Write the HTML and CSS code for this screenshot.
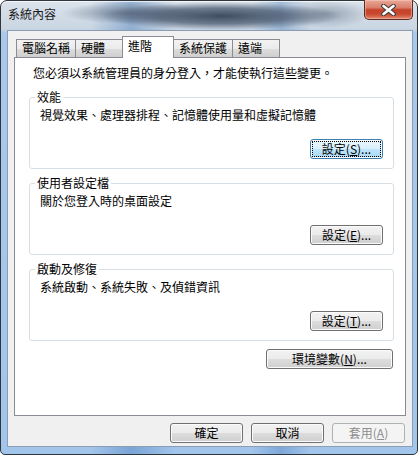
FILE: index.html
```html
<!DOCTYPE html>
<html lang="zh-Hant">
<head>
    <meta charset="UTF-8">
    <meta name="viewport" content="width=device-width, initial-scale=1.0">
    <title>系統內容</title>
    <link rel="stylesheet" href="styles.css">
</head>
<body>
    <div class="window">
        <div class="titlebar">
            <span class="title">系統內容</span>
            <button class="close-btn" title="關閉">
                <svg viewBox="0 0 15 12" width="15" height="12">
                    <path d="M2.5,2 L12.5,10 M12.5,2 L2.5,10" stroke="#3b3b3b" stroke-width="4.6" stroke-linecap="round" fill="none" />
                    <path d="M2.5,2 L12.5,10 M12.5,2 L2.5,10" stroke="#ffffff" stroke-width="2.6" stroke-linecap="round" fill="none" />
                </svg>
            </button>
        </div>

        <div class="client">
            <div class="tabs">
                <div class="tab">電腦名稱</div>
                <div class="tab">硬體</div>
                <div class="tab tab-active">進階</div>
                <div class="tab">系統保護</div>
                <div class="tab">遠端</div>
            </div>

            <div class="panel">
                <p class="intro">您必須以系統管理員的身分登入，才能使執行這些變更。</p>

                <fieldset class="group">
                    <legend>效能</legend>
                    <p>視覺效果、處理器排程、記憶體使用量和虛擬記憶體</p>
                    <div class="group-actions">
                        <button class="btn btn-focus">設定(<u>S</u>)...</button>
                    </div>
                </fieldset>

                <fieldset class="group">
                    <legend>使用者設定檔</legend>
                    <p>關於您登入時的桌面設定</p>
                    <div class="group-actions">
                        <button class="btn">設定(<u>E</u>)...</button>
                    </div>
                </fieldset>

                <fieldset class="group">
                    <legend>啟動及修復</legend>
                    <p>系統啟動、系統失敗、及偵錯資訊</p>
                    <div class="group-actions">
                        <button class="btn">設定(<u>T</u>)...</button>
                    </div>
                </fieldset>

                <div class="env-row">
                    <button class="btn btn-wide">環境變數(<u>N</u>)...</button>
                </div>
            </div>

            <div class="dialog-buttons">
                <button class="btn">確定</button>
                <button class="btn">取消</button>
                <button class="btn" disabled>套用(<u>A</u>)</button>
            </div>
        </div>
    </div>
</body>
</html>
```

FILE: styles.css
```css
body {
    margin: 0;
    width: 420px;
    height: 457px;
    background-color: #ffffff;
    font-family: "Noto Sans CJK TC", "Noto Sans", sans-serif;
    font-size: 12px;
    color: #000;
    overflow: hidden;
}
.window {
    width: 418px;
    height: 455px;
    box-sizing: border-box;
    border: 1px solid #30343b;
    border-radius: 7px 7px 5px 5px;
    padding: 0 4px 7px 6px;
    display: flex;
    flex-direction: column;
    background:
        radial-gradient(ellipse 120px 14px at 220px 15px, rgba(55,70,90,0.95), rgba(75,90,112,0.75) 55%, rgba(110,125,145,0) 100%),
        radial-gradient(ellipse 70px 11px at 130px 12px, rgba(95,110,130,0.8), rgba(110,125,145,0) 100%),
        radial-gradient(ellipse 45px 14px at 325px 13px, rgba(120,135,152,0.7), rgba(130,145,160,0) 100%),
        linear-gradient(90deg, rgba(60,110,170,0) 0, rgba(60,110,170,0) 90px, rgba(60,115,180,0.4) 130px, rgba(60,110,170,0) 175px, rgba(60,110,170,0) 250px, rgba(60,115,180,0.35) 280px, rgba(60,110,170,0) 310px),
        linear-gradient(180deg, #dbe3ec 0, #c9d5e2 28px, #a9c9ec 32px, #a2c5ec 100%);
    box-shadow: inset 0 1px 0 rgba(255,255,255,0.7);
}
.titlebar {
    height: 29px;
    display: flex;
    align-items: flex-start;
    padding-left: 1px;
}
.title {
    line-height: 14px;
    margin-top: 6px;
    color: #1a1a1a;
}
.close-btn {
    margin-left: auto;
    margin-top: -1px;
    width: 49px;
    height: 20px;
    padding: 0;
    border: 1px solid #5e2a22;
    border-top: none;
    border-radius: 0 0 5px 5px;
    background: linear-gradient(180deg, #e8a898 0%, #d9806b 40%, #c4422a 52%, #c94a30 75%, #e08a70 100%);
    box-shadow: inset 0 0 0 1px rgba(255,210,200,0.45);
    display: flex;
    align-items: center;
    justify-content: center;
}
.client {
    flex: 1;
    display: flex;
    flex-direction: column;
    background-color: #f0f0f0;
    border: 1px solid #8c9db3;
    padding: 5px 6px 3px 6px;
}
.tabs {
    display: flex;
    align-items: flex-end;
    height: 22px;
    padding-left: 2px;
    margin-bottom: -1px;
    position: relative;
    z-index: 1;
}
.tab {
    box-sizing: border-box;
    min-width: 48px;
    height: 18px;
    margin-left: -1px;
    margin-bottom: 1px;
    padding: 0 5px;
    line-height: 16px;
    border: 1px solid #898c95;
    border-bottom: none;
    background: linear-gradient(180deg, #f2f2f2 0%, #ebebeb 50%, #dddddd 51%, #cfcfcf 100%);
    white-space: nowrap;
}
.tab:first-child {
    margin-left: 0;
}
.tab-active {
    min-width: 52px;
    height: 22px;
    margin-bottom: 0;
    padding-top: 1px;
    background: #ffffff;
    position: relative;
    z-index: 2;
}
.panel {
    flex: 1;
    background-color: #ffffff;
    border: 1px solid #898c95;
    padding: 8px 11px 0 14px;
}
.intro {
    margin: 0 0 10px 0;
    padding-left: 4px;
    line-height: 14px;
}
.group {
    margin: 0 0 7px 0;
    padding: 4px 10px 9px 10px;
    border: 1px solid #d5dfe5;
    border-radius: 3px;
    box-shadow: inset 1px 1px 0 #ffffff;
}
.group legend {
    padding: 0 2px;
    margin-left: -5px;
    line-height: 14px;
}
.group p {
    margin: 0;
    line-height: 14px;
}
.group-actions {
    display: flex;
    justify-content: flex-end;
    margin-top: 17px;
}
.btn {
    box-sizing: border-box;
    width: 73px;
    height: 20px;
    padding: 0;
    font-family: inherit;
    font-size: 12px;
    line-height: 16px;
    color: #000;
    border: 1px solid #707070;
    border-radius: 3px;
    background: linear-gradient(180deg, #f2f2f2 0%, #ebebeb 50%, #dddddd 51%, #cfcfcf 100%);
    box-shadow: inset 0 0 0 1px #fbfbfb;
}
.btn u {
    text-decoration-thickness: 1px;
    text-underline-offset: 1px;
}
.btn-focus {
    border-color: #3c7fb1;
    background: linear-gradient(180deg, #eaf6fd 0%, #d9f0fc 50%, #bee6fd 51%, #a7d9f5 100%);
    outline: 1px dotted #000;
    outline-offset: -3px;
}
.btn-wide {
    width: 127px;
}
.btn:disabled {
    color: #8d8d8d;
    border-color: #adb2b5;
    background: #f4f4f4;
    box-shadow: none;
}
.env-row {
    display: flex;
    justify-content: flex-end;
    margin-top: 8px;
    padding-right: 1px;
}
.dialog-buttons {
    display: flex;
    justify-content: flex-end;
    gap: 8px;
    margin-top: 7px;
    padding-right: 1px;
}
```
